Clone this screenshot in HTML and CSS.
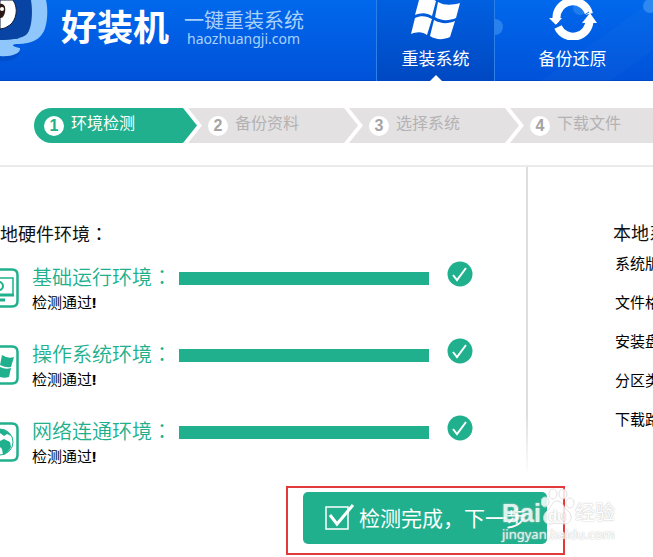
FILE: index.html
```html
<!DOCTYPE html>
<html lang="zh-CN">
<head>
  <meta charset="UTF-8">
  <meta name="viewport" content="width=device-width, initial-scale=1.0">
  <title>好装机 一键重装系统</title>
  <link rel="stylesheet" href="styles.css">
</head>
<body>
  <header class="header">
    <svg class="bubbles" width="293" height="81" viewBox="0 0 293 81">
      <path d="M180 81L293 0V50L250 81Z" fill="#fff" opacity=".02"/>
      <circle cx="135" cy="27" r="8" fill="#58a8f5" opacity=".45"/>
      <circle cx="290" cy="6" r="7" fill="#58a8f5" opacity=".5"/>
      <circle cx="220" cy="8" r="7" fill="#58a8f5" opacity=".35"/>
    </svg>
    <svg class="mascot" width="49" height="64" viewBox="0 0 49 64">
      <path d="M0 61C8 62 17 59 20 53L12 46H0Z" fill="#003fae" opacity=".4"/>
      <path d="M30 0H46C48 8 48 22 44 31C40 39 32 44 18 44C12 44 10 46 20 48C21 54 10 57 0 56V38L18 39Z" fill="#8fc6fb"/>
      <path d="M0 0H31C33 12 32 28 27 34C23 38 12 40 0 40Z" fill="#0844a3"/>
      <path d="M0 0H13C19 9 16 20 10 25Q5 29 0 29Z" fill="#fff" stroke="#111c38" stroke-width="1"/>
      <path d="M0 4C4 3 6 7 5 12C4 17 2 18 0 18Z" fill="#2b1916"/>
      <circle cx="2" cy="9" r="2" fill="#fff"/>
    </svg>
    <div class="logo">好装机</div>
    <div class="tagline">
      <div class="slogan">一键重装系统</div>
      <div class="domain">haozhuangji.com</div>
    </div>
    <nav class="nav">
      <a class="tab active" href="#reinstall">
        <svg width="50" height="40" viewBox="0 0 50 40" fill="#fff">
          <path d="M8 0C14-3 20-2 25 1L21 16C15 12 9 13 4 15Z"/>
          <path d="M27 2C34 6 42 5 49 3L45 18C38 21 30 21 24 17Z"/>
          <path d="M4 18C10 15 16 16 21 19L16 35C11 31 5 32 0 34Z"/>
          <path d="M23 20C30 24 37 24 44 21L39 37C32 40 25 40 19 36Z"/>
        </svg>
        <span>重装系统</span>
      </a>
      <a class="tab" href="#backup">
        <svg width="50" height="40" viewBox="0 0 50 40">
          <path d="M8.500 19A16.500 16.500 0 0 1 41 14" fill="none" stroke="#fff" stroke-width="8"/>
          <path d="M41.500 20A16.500 16.500 0 0 1 10 27" fill="none" stroke="#fff" stroke-width="8"/>
          <path d="M1 18H14L8 25ZM34 23L42 13L49 23Z" fill="#fff"/>
          <path d="M5 27L14 21M35 16L41 12" stroke="#0a62e2" stroke-width="1"/>
        </svg>
        <span>备份还原</span>
      </a>
    </nav>
  </header>

  <ol class="steps">
    <li class="step current"><span class="num">1</span><span class="text">环境检测</span></li>
    <li class="step"><span class="num">2</span><span class="text">备份资料</span></li>
    <li class="step"><span class="num">3</span><span class="text">选择系统</span></li>
    <li class="step"><span class="num">4</span><span class="text">下载文件</span></li>
  </ol>

  <main class="main">
    <section class="hardware">
      <h2>地硬件环境<span class="colon" lang="zh-TW">：</span></h2>
      <div class="check">
        <svg class="icon" width="19" height="40" viewBox="0 0 19 40" fill="none" stroke="#20b08d">
          <path d="M-4 1.500H12Q17.500 1.500 17.500 7V33Q17.500 38.500 12 38.500H-4" stroke-width="2.500"/>
          <path d="M-2 10H13V27" stroke-width="1.500"/>
          <path d="M-2 27H14" stroke-width="3"/>
          <path d="M-2 32H5" stroke-width="3"/>
          <circle cx="-1" cy="18" r="4" stroke-width="2"/>
        </svg>
        <div class="label">
          <div class="name">基础运行环境<span class="colon" lang="zh-TW">：</span></div>
          <div class="state">检测通过<b>!</b></div>
        </div>
        <div class="bar"></div>
        <svg class="ok" width="26" height="26" viewBox="0 0 26 26"><circle cx="13" cy="13" r="12.500" fill="#20b08d"/><path d="M6 14L10 19L19 7" fill="none" stroke="#fff" stroke-width="2"/></svg>
      </div>
      <div class="check">
        <svg class="icon" width="19" height="40" viewBox="0 0 19 40" fill="none" stroke="#20b08d">
          <path d="M-4 1.500H12Q17.500 1.500 17.500 7V33Q17.500 38.500 12 38.500H-4" stroke-width="2.500"/>
          <path d="M2 10Q8 14 14 12L11 22Q6 23 0 20ZM0 22Q6 25 11 23L9 32Q3 34-2 31Z" fill="#20b08d" stroke="none"/>
        </svg>
        <div class="label">
          <div class="name">操作系统环境<span class="colon" lang="zh-TW">：</span></div>
          <div class="state">检测通过<b>!</b></div>
        </div>
        <div class="bar"></div>
        <svg class="ok" width="26" height="26" viewBox="0 0 26 26"><circle cx="13" cy="13" r="12.500" fill="#20b08d"/><path d="M6 14L10 19L19 7" fill="none" stroke="#fff" stroke-width="2"/></svg>
      </div>
      <div class="check">
        <svg class="icon" width="19" height="40" viewBox="0 0 19 40" fill="none" stroke="#20b08d">
          <path d="M-4 1.500H12Q17.500 1.500 17.500 7V33Q17.500 38.500 12 38.500H-4" stroke-width="2.500"/>
          <circle cx="0" cy="20" r="13" stroke-width="1"/>
          <path d="M0 7Q8 8 11 14L7 12L4 14L0 11ZM0 19L4 17L10 20L11 25Q8 31 3 33L2 27L0 25Z" fill="#20b08d" stroke="none"/>
        </svg>
        <div class="label">
          <div class="name">网络连通环境<span class="colon" lang="zh-TW">：</span></div>
          <div class="state">检测通过<b>!</b></div>
        </div>
        <div class="bar"></div>
        <svg class="ok" width="26" height="26" viewBox="0 0 26 26"><circle cx="13" cy="13" r="12.500" fill="#20b08d"/><path d="M6 14L10 19L19 7" fill="none" stroke="#fff" stroke-width="2"/></svg>
      </div>
    </section>
    <section class="system">
      <h2>本地系</h2>
      <ul>
        <li>系统版</li>
        <li>文件格</li>
        <li>安装盘</li>
        <li>分区类</li>
        <li>下载路</li>
      </ul>
    </section>
  </main>

  <div class="actions">
    <div class="highlight">
      <button class="next" type="button">
        <svg width="30" height="28" viewBox="0 0 30 28" fill="none" stroke="#fff">
          <path d="M1 4H23V26H1Z" stroke-width="1.500"/>
          <path d="M5 12L12 21L28 2" stroke-width="3"/>
        </svg>
        检测完成，下一步
      </button>
      <div class="watermark">
        <div class="brand">
          <span class="bai">Bai</span>
          <span class="paw">
            <svg width="34" height="38" viewBox="0 0 34 38" fill="#fff" stroke="#dedede">
              <ellipse cx="4" cy="14" rx="4" ry="5"/>
              <ellipse cx="12" cy="6" rx="4" ry="5"/>
              <ellipse cx="22" cy="6" rx="4" ry="5"/>
              <ellipse cx="29" cy="15" rx="4" ry="5"/>
              <path d="M16 13C22 13 22 19 27 23C33 28 30 36 23 36C18 35 14 35 10 36C2 37 0 28 6 23C11 19 11 13 16 13Z"/>
            </svg>
            <span class="du">du</span>
          </span>
          <span class="jy">经验</span>
        </div>
        <div class="site">jingyan.baidu.com</div>
      </div>
    </div>
  </div>
</body>
</html>
```
FILE: styles.css
```css
body { margin: 0; background: #fff; color: #111; font-family: "Noto Sans", "Noto Sans CJK SC", sans-serif; overflow: hidden; }
h2, ul, ol { margin: 0; padding: 0; font-weight: normal; list-style: none; }
svg { display: block; flex: none; overflow: hidden; }
.colon { font-family: "Noto Sans CJK TC", sans-serif; }

/* 顶部 */
.header { position: relative; display: flex; height: 81px; background: linear-gradient(#0068ec, #0052d9); color: #fff; white-space: nowrap; box-shadow: inset 0 -1px #0049c4; }
.bubbles { position: absolute; top: 0; left: 360px; }
.logo { margin-left: 12px; font-size: 36px; line-height: 50px; font-weight: 700; font-family: "Noto Sans CJK SC", sans-serif; }
.tagline { margin: 10px 0 0 15px; color: #a9d2fb; }
.slogan { font-size: 20px; line-height: 22px; }
.domain { padding-left: 3px; font-size: 14px; line-height: 14px; }
.nav { position: relative; display: flex; gap: 18px; margin-left: auto; margin-right: 21px; }
.tab { position: relative; display: flex; flex-direction: column; align-items: center; width: 119px; color: #fff; text-decoration: none; font-size: 17px; line-height: 38px; box-sizing: border-box; }
.tab.active { background: linear-gradient(#0060e0, #0048c2); border-left: 1px solid #2d80ea; border-right: 1px solid #2d80ea; }
.tab.active::after { content: ""; position: absolute; bottom: 0; left: 53px; border: 6px solid transparent; border-top: 0; border-bottom-color: #fff; }

/* 步骤条 */
.steps { display: flex; padding: 27px 0 22px 34px; border-bottom: 2px solid #ebebeb; }
.step { display: flex; flex: none; align-items: center; gap: 7px; box-sizing: border-box; width: 170px; height: 35px; margin-left: -9px; padding-left: 20px; background: #e3e1e2; color: #b4b2b3; font-size: 16px; line-height: 31px; clip-path: polygon(0 0, 156px 0, 100% 50%, 156px 100%, 0 100%, 14px 50%); }
.step.current { width: 163px; margin-left: 0; padding-left: 10px; border-radius: 18px 0 0 18px; background: #20b08d; color: #fff; clip-path: polygon(0 0, 149px 0, 100% 50%, 149px 100%, 0 100%); }
.text { padding-bottom: 4px; }
.num { width: 20px; height: 20px; border-radius: 50%; background: #fff; color: #a5a3a4; font: bold 16px/20px "Liberation Sans", sans-serif; text-align: center; }
.current .num { color: #20b08d; }

/* 检测结果 */
.main { display: flex; height: 308px; }
.hardware { box-sizing: border-box; width: 526px; padding-top: 52px; }
h2 { font-size: 18px; line-height: 28px; white-space: nowrap; }
.check { display: flex; height: 77px; }
.hardware h2 { margin-bottom: 16px; }
.icon { margin-top: 4px; }
.label { width: 160px; padding-left: 13px; flex: none; box-sizing: border-box; white-space: nowrap; }
.name { color: #20b08d; font-size: 20px; line-height: 26px; font-weight: 350; font-family: "Noto Sans CJK SC", sans-serif; }
.state { color: #000; font-size: 15px; line-height: 24px; }
.bar { width: 250px; height: 13px; margin-top: 8px; background: #20b08d; }
.ok { margin: -3px 0 0 18px; }
.system { flex: 1; min-width: 0; padding: 52px 0 0 85px; border-left: 2px solid; border-image: linear-gradient(#dedede 80%, #fff) 1; white-space: nowrap; overflow: hidden; }
.system li { padding-left: 2px; color: #000; font-size: 15px; line-height: 39px; }
.system ul { margin-top: -3px; }

/* 下一步 */
.actions { padding: 11px 0 0 286px; }
.highlight { position: relative; box-sizing: border-box; width: 279px; height: 69px; padding: 4px 15px; border: 2px solid #e23a3a; }
.next { display: flex; align-items: center; gap: 4px; width: 244px; height: 52px; padding: 0 0 2px 22px; border: 0; border-radius: 5px; background: #20b08d; color: #fff; font-size: 21px; font-family: "Noto Sans CJK SC", sans-serif; white-space: nowrap; cursor: pointer; }
.watermark { position: absolute; top: 0; left: 214px; color: #fff; white-space: nowrap; opacity: .85; pointer-events: none; text-shadow: 0 0 1px #bbb, 0 0 2px #ccc; }
.brand { display: flex; align-items: center; height: 38px; }
.bai { padding-top: 12px; font: bold 25px/26px "Liberation Sans", sans-serif; }
.paw { position: relative; }
.du { position: absolute; left: 7px; bottom: 2px; font: bold 15px/16px "Liberation Sans", sans-serif; }
.jy { padding-top: 12px; font-size: 20px; line-height: 26px; }
.site { font-size: 13px; line-height: 16px; }
```
